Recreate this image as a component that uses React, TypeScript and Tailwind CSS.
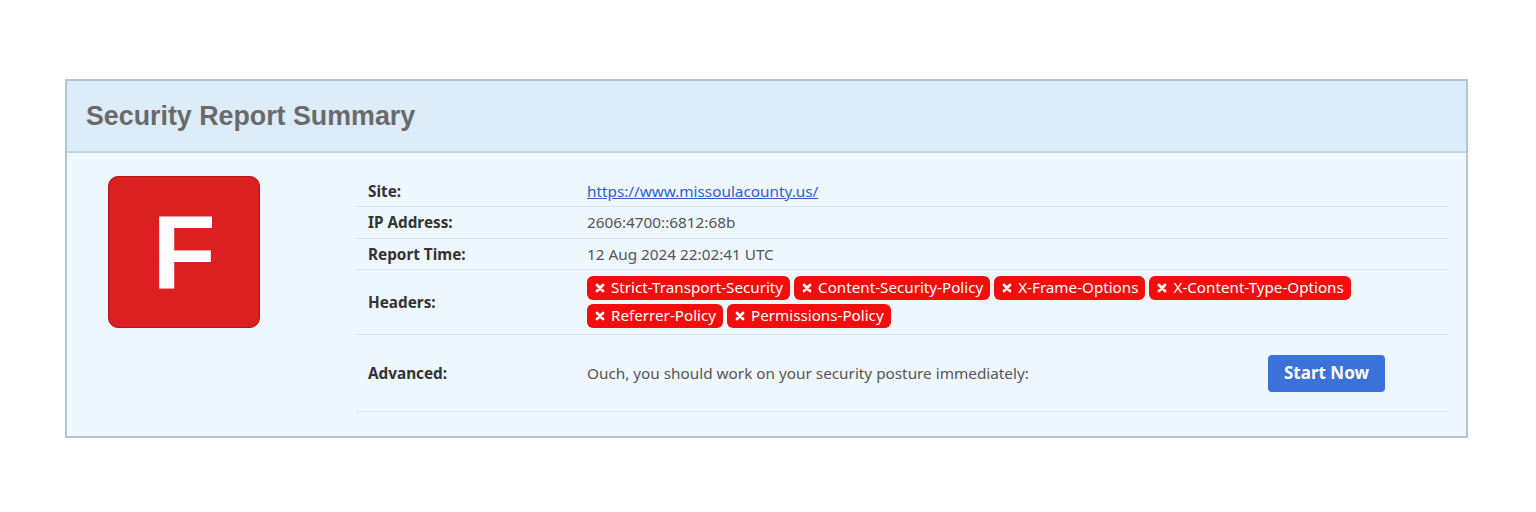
import React from "react";

const headers = [
  "Strict-Transport-Security",
  "Content-Security-Policy",
  "X-Frame-Options",
  "X-Content-Type-Options",
  "Referrer-Policy",
  "Permissions-Policy",
];

function Chip({ label }: { label: string }) {
  return (
    <span className="inline-flex items-center h-[24px] rounded-[6px] bg-[#f50d0d] text-white text-[15.2px] leading-none pl-[8px] pr-[7px]">
      <svg width="10" height="10" viewBox="0 0 10 10" className="mr-[6px]">
        <path d="M2 2 L8 8 M8 2 L2 8" stroke="white" strokeWidth="2.8" strokeLinecap="round" />
      </svg>
      {label}
    </span>
  );
}

export default function App() {
  return (
    <div className="w-[1536px] h-[512px] bg-white pt-[79px] pl-[65px]" style={{ fontFamily: '"Noto Sans", sans-serif' }}>
      <div className="w-[1403px] border-2 border-[#b3c8cc] bg-[#eef6fe]">
        <div className="h-[72px] bg-[#dcecfb] border-b-2 border-[#c2d6e0] flex items-center pl-[19px]">
          <h1 className="text-[26.8px] font-bold text-[#6a6a6a]" style={{ fontFamily: '"Liberation Sans", Arial, sans-serif' }}>
            Security Report Summary
          </h1>
        </div>
        <div className="flex pl-[41px] pr-[18px] pt-[23px] pb-[24px]">
          <div className="w-[152px] h-[152px] rounded-[10px] bg-[#dc1f20] border border-[#b01818] flex items-center justify-center shrink-0">
            <span className="text-white font-bold text-[104px] leading-none" style={{ fontFamily: '"Liberation Sans", Arial, sans-serif' }}>
              F
            </span>
          </div>
          <div className="ml-[96px] flex-1 text-[15.3px]">
            <div className="flex h-[31px] items-center border-b border-[#d8e1e8]">
              <div className="w-[231px] pl-[12px] font-bold text-[#333]">Site:</div>
              <a className="text-[#2a62c9] underline">https://www.missoulacounty.us/</a>
            </div>
            <div className="flex h-[32px] items-center border-b border-[#d8e1e8]">
              <div className="w-[231px] pl-[12px] font-bold text-[#333]">IP Address:</div>
              <div className="text-[#555]">2606:4700::6812:68b</div>
            </div>
            <div className="flex h-[31px] items-center border-b border-[#d8e1e8]">
              <div className="w-[231px] pl-[12px] font-bold text-[#333]">Report Time:</div>
              <div className="text-[#555]">12 Aug 2024 22:02:41 UTC</div>
            </div>
            <div className="flex h-[65px] items-center border-b border-[#d8e1e8]">
              <div className="w-[231px] pl-[12px] font-bold text-[#333]">Headers:</div>
              <div className="flex flex-wrap gap-[4px] w-[780px]">
                {headers.map((h) => (
                  <Chip key={h} label={h} />
                ))}
              </div>
            </div>
            <div className="flex h-[77px] items-center border-b border-[#d8e1e8]">
              <div className="w-[231px] pl-[12px] font-bold text-[#333]">Advanced:</div>
              <div className="text-[#555] flex-1">Ouch, you should work on your security posture immediately:</div>
              <button className="h-[37px] w-[117px] rounded-[4px] bg-[#3a72d9] text-white font-bold text-[17px] mr-[63px]">
                Start Now
              </button>
            </div>
          </div>
        </div>
      </div>
    </div>
  );
}
